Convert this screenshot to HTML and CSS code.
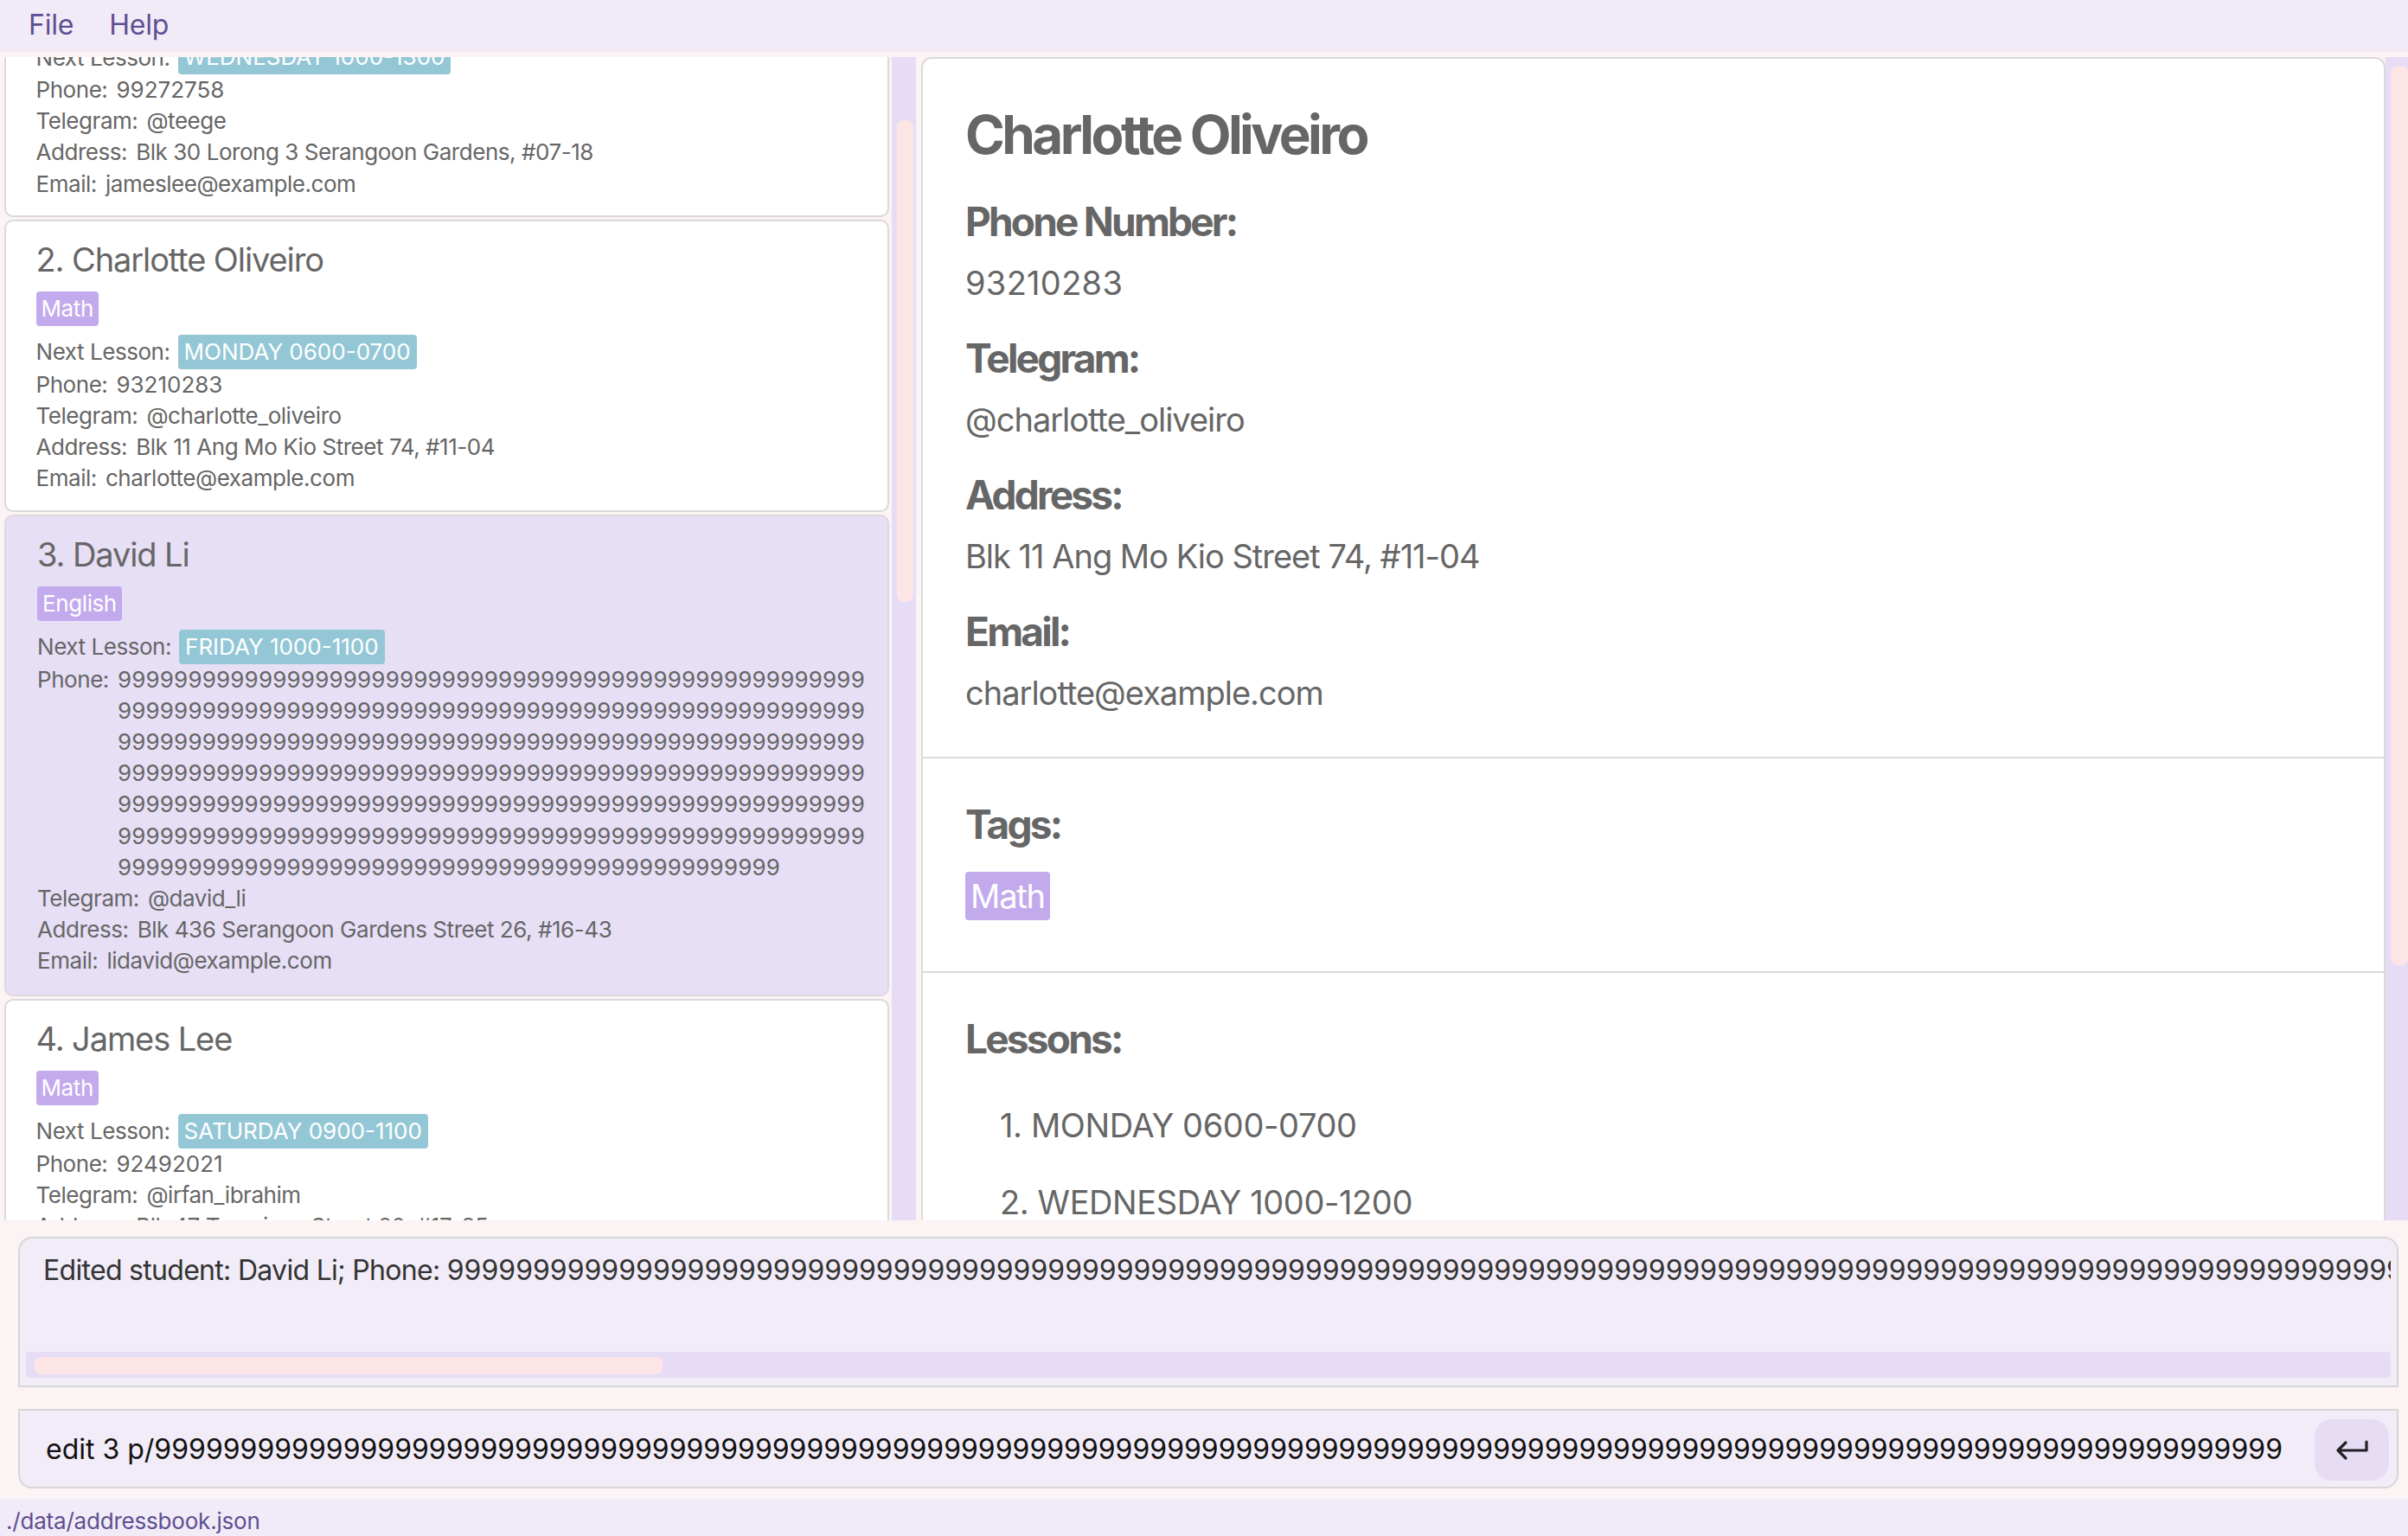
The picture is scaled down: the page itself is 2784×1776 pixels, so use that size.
FILE: index.html
```html
<!DOCTYPE html>
<html lang="en">
<head>
<meta charset="utf-8">
<title>TutorBook</title>
<link rel="stylesheet" href="styles.css">
</head>
<body>
<div class="app">
  <div class="menubar">
    <span class="menu-item">File</span>
    <span class="menu-item">Help</span>
  </div>

  <div class="main">
    <div class="listpane">
      <div class="listview">
        <div class="listinner">
          <div class="card">
            <div class="card-name">1. Irfan Ibrahim</div>
            <div class="tags"><span class="tag">Math</span></div>
            <div class="lesson-row"><span class="label">Next Lesson:</span><span class="ltag">WEDNESDAY 1000-1300</span></div>
            <div class="field"><span class="label">Phone:</span><span class="value num">99272758</span></div>
            <div class="field"><span class="label">Telegram:</span><span class="value">@teege</span></div>
            <div class="field"><span class="label">Address:</span><span class="value">Blk 30 Lorong 3 Serangoon Gardens, #07-18</span></div>
            <div class="field"><span class="label">Email:</span><span class="value">jameslee@example.com</span></div>
          </div>

          <div class="card">
            <div class="card-name">2. Charlotte Oliveiro</div>
            <div class="tags"><span class="tag">Math</span></div>
            <div class="lesson-row"><span class="label">Next Lesson:</span><span class="ltag">MONDAY 0600-0700</span></div>
            <div class="field"><span class="label">Phone:</span><span class="value num">93210283</span></div>
            <div class="field"><span class="label">Telegram:</span><span class="value">@charlotte_oliveiro</span></div>
            <div class="field"><span class="label">Address:</span><span class="value">Blk 11 Ang Mo Kio Street 74, #11-04</span></div>
            <div class="field"><span class="label">Email:</span><span class="value">charlotte@example.com</span></div>
          </div>

          <div class="card selected">
            <div class="card-name">3. David Li</div>
            <div class="tags"><span class="tag">English</span></div>
            <div class="lesson-row"><span class="label">Next Lesson:</span><span class="ltag">FRIDAY 1000-1100</span></div>
            <div class="field"><span class="label">Phone:</span><span class="value num long">99999999999999999999999999999999999999999999999999999999999999999999999999999999999999999999999999999999999999999999999999999999999999999999999999999999999999999999999999999999999999999999999999999999999999999999999999999999999999999999999999999999999999999999999999999999999999999999999999999999999999999999999999999999999999999999999999999999999999999999999999999</span></div>
            <div class="field"><span class="label">Telegram:</span><span class="value">@david_li</span></div>
            <div class="field"><span class="label">Address:</span><span class="value">Blk 436 Serangoon Gardens Street 26, #16-43</span></div>
            <div class="field"><span class="label">Email:</span><span class="value">lidavid@example.com</span></div>
          </div>

          <div class="card">
            <div class="card-name">4. James Lee</div>
            <div class="tags"><span class="tag">Math</span></div>
            <div class="lesson-row"><span class="label">Next Lesson:</span><span class="ltag">SATURDAY 0900-1100</span></div>
            <div class="field"><span class="label">Phone:</span><span class="value num">92492021</span></div>
            <div class="field"><span class="label">Telegram:</span><span class="value">@irfan_ibrahim</span></div>
            <div class="field"><span class="label">Address:</span><span class="value">Blk 47 Tampines Street 20, #17-35</span></div>
            <div class="field"><span class="label">Email:</span><span class="value">irfan@example.com</span></div>
          </div>
        </div>
      </div>
      <div class="vscroll"><div class="thumb thumb-list"></div></div>
    </div>

    <div class="detailpane">
      <div class="detail">
        <div class="dsection dsection-main">
          <div class="dname">Charlotte Oliveiro</div>
          <div class="dgroup">
            <div class="dhead">Phone Number:</div>
            <div class="dvalue num">93210283</div>
          </div>
          <div class="dgroup">
            <div class="dhead">Telegram:</div>
            <div class="dvalue">@charlotte_oliveiro</div>
          </div>
          <div class="dgroup">
            <div class="dhead">Address:</div>
            <div class="dvalue">Blk 11 Ang Mo Kio Street 74, #11-04</div>
          </div>
          <div class="dgroup">
            <div class="dhead">Email:</div>
            <div class="dvalue">charlotte@example.com</div>
          </div>
        </div>
        <div class="dsection dsection-tags">
          <div class="dhead">Tags:</div>
          <div class="dtags"><span class="dtag">Math</span></div>
        </div>
        <div class="dsection dsection-lessons">
          <div class="dhead">Lessons:</div>
          <ol class="lessons">
            <li>1. MONDAY 0600-0700</li>
            <li>2. WEDNESDAY 1000-1200</li>
          </ol>
        </div>
      </div>
      <div class="vscroll vscroll-right"><div class="thumb thumb-detail"></div></div>
    </div>
  </div>

  <div class="bottom">
    <div class="result">
      <div class="result-text">Edited student: David Li; Phone: <span class="num">99999999999999999999999999999999999999999999999999999999999999999999999999999999999999999999999999999999999999999999999999999999999999999999999999999999999999999999999999999999999999</span>; Telegram: @david_li; Address: Blk 436 Serangoon Gardens Street 26, #16-43</div>
      <div class="hscroll"><div class="hthumb"></div></div>
    </div>
    <div class="command">
      <div class="cmd-text">edit 3 p/99999999999999999999999999999999999999999999999999999999999999999999999999999999999999999999999999999999999999999999999999999999999999999999999999999999999999999999999999999999999999</div>
      <div class="enter">
        <svg width="42" height="28" viewBox="0 0 42 28"><path d="M38 4 V14 H5 M14 5 L5 14 L14 23" fill="none" stroke="#222" stroke-width="3.2" stroke-linecap="round" stroke-linejoin="round"/></svg>
      </div>
    </div>
  </div>

  <div class="status">./data/addressbook.json</div>
</div>
</body>
</html>
```

FILE: styles.css
```css
* { box-sizing: border-box; margin: 0; padding: 0; }
html, body { width: 2784px; height: 1776px; overflow: hidden; }
body {
  font-family: Inter, "Noto Sans", sans-serif;
  background: #fcf3f4;
  color: #666666;
}
.app { display: flex; flex-direction: column; height: 1776px; }

/* menu */
.menubar {
  height: 60px;
  background: #f1ebf8;
  display: flex;
  align-items: center;
  gap: 41px;
  padding: 0 0 3px 33px;
  font-size: 32px;
  letter-spacing: -0.2px;
  color: #5e4f91;
}

/* main */
.main { margin-top: 6px; height: 1345px; display: flex; }
.listpane { width: 1059px; display: flex; flex: none; }
.listview { width: 1031px; overflow: hidden; padding: 0 3px 0 5px; }
.listinner { margin-top: -153px; display: flex; flex-direction: column; gap: 3px; }

.card {
  background: #ffffff;
  border: 2px solid #dadada;
  border-radius: 10px;
  padding: 21px 20px 18px 34.5px;
}
.card.selected { background: #e7dff6; padding-left: 36px; padding-bottom: 20px; }
.card-name { font-size: 38px; line-height: 46px; letter-spacing: -1.1px; }
.tags { margin-top: 14px; display: flex; gap: 8px; height: 40px; }
.tag {
  background: #c3aaed; color: #fff;
  font-size: 26px; line-height: 40px; height: 40px;
  padding: 0 6px; border-radius: 4px;
  letter-spacing: -0.4px;
}
.lesson-row {
  margin-top: 10px; height: 40px;
  display: flex; align-items: center; gap: 9px;
  font-size: 26px; letter-spacing: -0.45px;
}
.ltag {
  background: #94c7d6; color: #fff;
  line-height: 40px; height: 40px;
  padding: 0 7px; border-radius: 4px;
  letter-spacing: 0;
}
.field { display: flex; gap: 10px; font-size: 26px; line-height: 36.2px; letter-spacing: -0.45px; }
.label { flex: none; }
.value { flex: 1; min-width: 0; }
.value.num { letter-spacing: 0; }
.value.long { word-break: break-all; letter-spacing: 0.18px; }

/* scrollbars */
.vscroll { width: 28px; flex: none; background: #e6dcf5; padding-left: 6px; }
.thumb { width: 19px; background: #fde4e5; border-radius: 8px; }
.thumb-list { margin-top: 73px; height: 557px; }
.vscroll-right { width: 26px; }
.thumb-detail { margin-top: 10px; height: 1040px; width: 20px; }

/* detail */
.detailpane { margin-left: 6px; flex: 1; display: flex; }
.detail {
  width: 1693px;
  flex: none;
  background: #ffffff;
  border: 2px solid #dadada;
  border-bottom: none;
  border-radius: 12px 12px 0 0;
  overflow: hidden;
}
.dsection { border-bottom: 2px solid #dadada; padding-left: 49px; }
.dsection-main { height: 809px; padding-top: 49.5px; }
.dsection-tags { height: 248px; padding-top: 48px; }
.dsection-lessons { border-bottom: none; padding-top: 48px; }
.dname { font-size: 62px; font-weight: 700; line-height: 76px; letter-spacing: -3.6px; margin-bottom: 34px; }
.dgroup + .dgroup { margin-top: 36px; }
.dhead { font-size: 46px; font-weight: 700; line-height: 56px; letter-spacing: -2.8px; }
.dvalue { font-size: 38px; line-height: 46px; margin-top: 20px; letter-spacing: -1px; }
.dvalue.num { letter-spacing: 0.3px; }
.dtags { margin-top: 27px; display: flex; }
.dtag {
  background: #c3aaed; color: #fff;
  font-size: 38px; height: 56px; line-height: 56px;
  padding: 0 6px; border-radius: 4px;
  letter-spacing: -1.2px;
}
.lessons { list-style: none; margin-top: 49px; padding-left: 40px; }
.lessons li { font-size: 38px; line-height: 46px; letter-spacing: -0.4px; }
.lessons li + li { margin-top: 43px; }

/* bottom */
.bottom { height: 322px; padding: 19px 11px 12px 21px; display: flex; flex-direction: column; gap: 25px; }
.result {
  height: 174px;
  background: #f1ecf7;
  border: 2px solid #d6d6d6;
  border-radius: 16px 16px 0 0;
  padding: 17px 7px 9px 7px;
  display: flex; flex-direction: column;
}
.result-text {
  flex: 1; min-height: 0;
  padding-left: 20px;
  overflow: hidden; white-space: nowrap;
  font-size: 32px; line-height: 40px; color: #333333;
  letter-spacing: -0.7px;
}
.result-text .num { letter-spacing: 0; }
.hscroll { height: 30px; background: #e6dcf5; border-radius: 4px; padding: 6px 0 0 10px; }
.hthumb { width: 726px; height: 20px; background: #fde4e5; border-radius: 7px; }

.command {
  height: 92px;
  background: #f1ecf7;
  border: 2px solid #d6d6d6;
  border-radius: 0 0 16px 16px;
  display: flex; align-items: center;
  padding: 0 9px 0 30px;
}
.cmd-text {
  flex: 1; min-width: 0; margin-right: 36px;
  overflow: hidden; white-space: nowrap;
  font-size: 32px; color: #111111;
}
.enter {
  width: 86px; height: 71px; flex: none;
  margin-top: 3px;
  background: #e6ddf5; border-radius: 20px;
  display: flex; align-items: center; justify-content: center;
}

/* status */
.status {
  height: 43px;
  background: #f1ebf8;
  padding: 10px 0 0 7px;
  font-size: 26px; line-height: 31.5px;
  letter-spacing: -0.2px;
  color: #5e4f91;
}
```
